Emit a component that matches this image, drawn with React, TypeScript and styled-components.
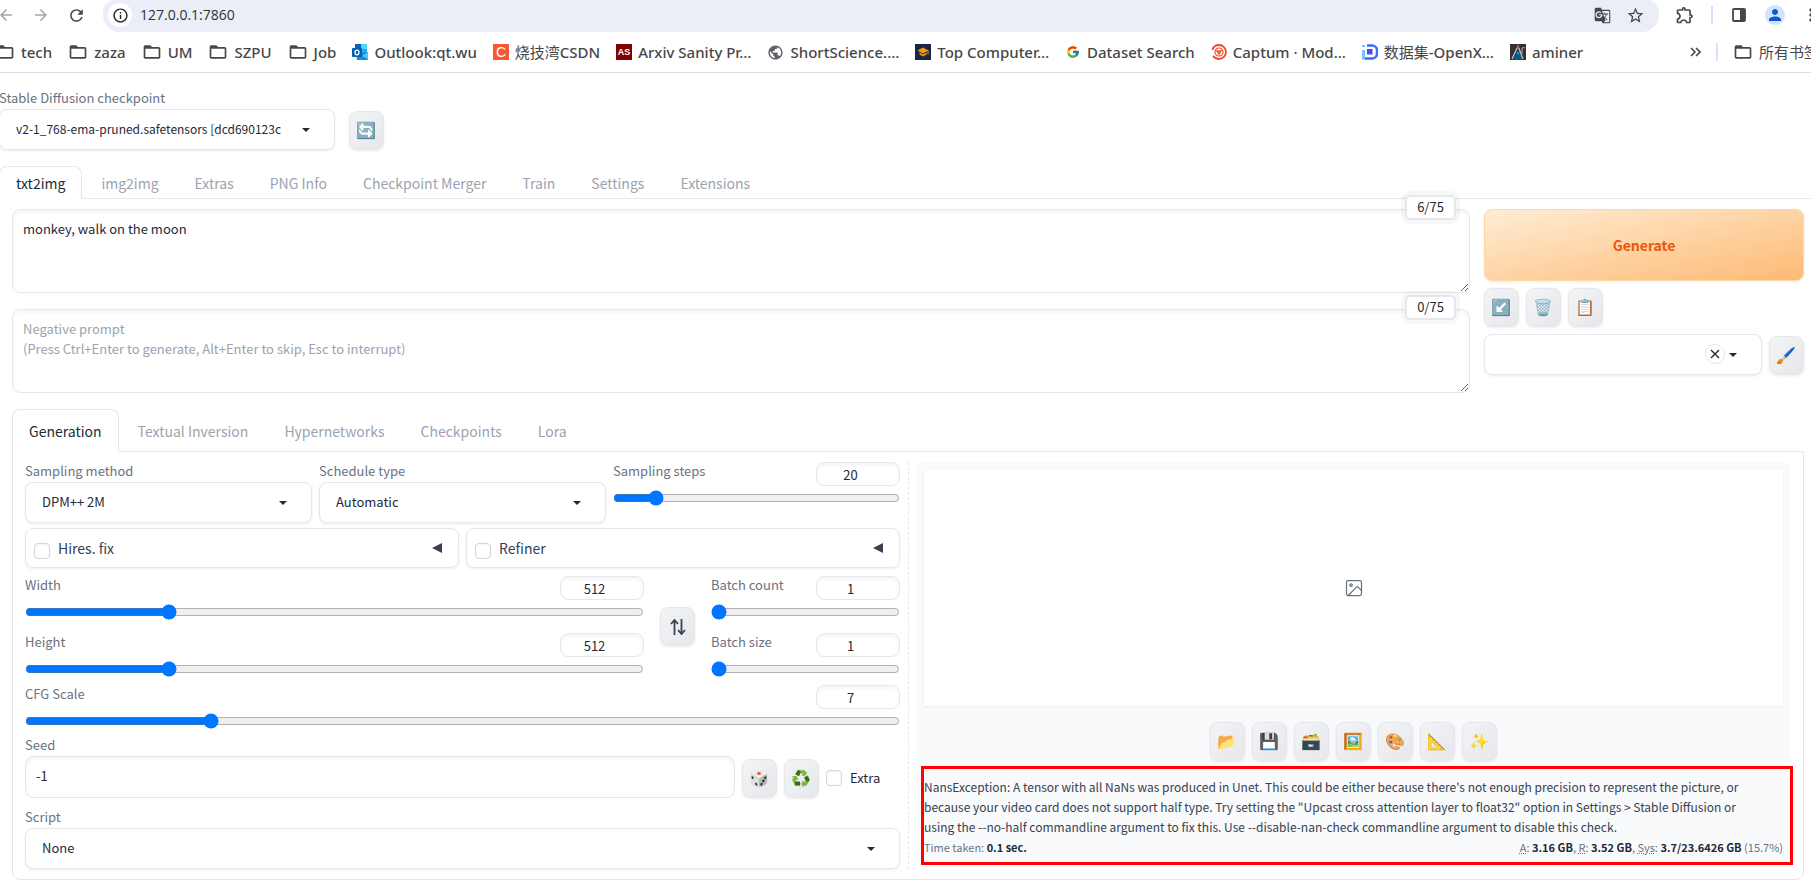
import React from "react";
import styled, { createGlobalStyle } from "styled-components";
import {
  MdArrowBack,
  MdArrowForward,
  MdFolderOpen,
  MdGTranslate,
  MdOutlineExtension,
  MdOutlineInfo,
  MdPerson,
  MdPublic,
  MdRefresh,
  MdSchool,
  MdStarBorder,
  MdMoreVert,
} from "react-icons/md";
import { FcGoogle } from "react-icons/fc";

const line = "#e5e7eb";
const ink = "#1f2937";
const muted = "#6b7280";
const faint = "#9ca3af";
const dropShadow = "0 1px 3px rgba(0, 0, 0, 0.08)";

const GlobalStyle = createGlobalStyle`
  *, *::before, *::after { box-sizing: border-box; }
  body {
    margin: 0;
    overflow: hidden;
    background: #fff;
    color: ${ink};
    font-family: "Noto Sans CJK SC", "Noto Sans", sans-serif;
    font-size: 13px;
    line-height: 20px;
  }
  button, input, select, textarea { font: inherit; color: inherit; margin: 0; }
`;

/* ---------- browser bars ---------- */

const Toolbar = styled.header`
  display: flex;
  align-items: center;
  height: 32px;
  color: #474747;
`;

const NavButtons = styled.div`
  display: flex;
  align-items: center;
  gap: 15px;
  width: 107px;
  padding-bottom: 2px;
  margin-left: -4px;
`;

const IconButton = styled.button<{ $dim?: boolean }>`
  display: grid;
  place-items: center;
  flex: none;
  width: 20px;
  height: 20px;
  padding: 0;
  border: 0;
  background: none;
  color: ${(p) => (p.$dim ? "#a6a6a6" : "#474747")};
`;

const AddressBar = styled.div`
  flex: 1;
  display: flex;
  align-items: center;
  height: 32px;
  padding: 0 14px 2px 5px;
  gap: 8px;
  border-radius: 12px 12px 17px 17px;
  background: #ebeef7;
`;

const SiteInfo = styled.button`
  display: grid;
  place-items: center;
  width: 24px;
  height: 24px;
  padding: 0;
  border: 0;
  border-radius: 50%;
  background: #fff;
  color: #1f1f1f;
`;

const Url = styled.input`
  flex: 1;
  border: 0;
  padding: 0;
  background: none;
  font-family: "Open Sans", "Noto Sans", sans-serif;
  font-size: 14px;
  color: #303136;
  outline: 0;
`;

const AddressActions = styled.div`
  display: flex;
  gap: 13px;
`;

const ToolbarActions = styled.div`
  display: flex;
  align-items: center;
  gap: 16px;
  width: 152px;
  padding: 0 0 2px 16px;
  overflow: hidden;
`;

const Separator = styled.span`
  flex: none;
  width: 2px;
  height: 18px;
  background: #d3e3fd;
`;

const Avatar = styled.span`
  display: grid;
  place-items: center;
  flex: none;
  width: 20px;
  height: 20px;
  border-radius: 50%;
  background: #d3e3fd;
  color: #0b57d0;
`;

const Bookmarks = styled.nav`
  display: flex;
  align-items: center;
  height: 41px;
  margin-left: -5px;
  border-bottom: 1px solid #dfdfdf;
  overflow: hidden;
  font-family: "Noto Sans", "Noto Sans CJK SC", sans-serif;
  font-size: 15px;
  font-weight: 500;
  color: #474747;
`;

const Bookmark = styled.a`
  display: flex;
  align-items: center;
  flex: none;
  gap: 6px;
  margin-right: 16px;
  color: inherit;
  text-decoration: none;
  white-space: nowrap;
`;

const BookmarkIcon = styled.span`
  display: grid;
  place-items: center;
  min-width: 16px;
  height: 20px;
`;

const Hanzi = styled.span`
  font-family: "Noto Sans CJK SC", sans-serif;
  font-weight: 400;
`;

const BookmarksEnd = styled.div`
  display: flex;
  align-items: center;
  flex: none;
  gap: 15px;
  width: 121px;
  margin-left: auto;
  svg { flex: none; }
`;

/* ---------- shared form parts ---------- */

const Label = styled.label`
  display: block;
  height: 20px;
  line-height: 18px;
  color: ${muted};
`;

const SelectBox = styled.div`
  position: relative;
  flex: 1;
  min-width: 0;
`;

const SelectInput = styled.select<{ $dense?: boolean }>`
  display: block;
  width: 100%;
  height: 41px;
  padding: 0 42px 2px 16px;
  border: 1px solid ${line};
  border-radius: 8px;
  background: #fff;
  box-shadow: ${dropShadow};
  appearance: none;
  font-size: ${(p) => (p.$dense ? 12 : 13)}px;
`;

const Caret = styled.svg`
  position: absolute;
  top: 11px;
  right: 20px;
  width: 18px;
  height: 18px;
  pointer-events: none;
`;

const ClearButton = styled.button`
  position: absolute;
  top: 10px;
  right: 37px;
  display: grid;
  place-items: center;
  width: 20px;
  height: 20px;
  padding: 0;
  border: 1px solid ${line};
  border-radius: 50%;
  background: #fff;
`;

const ToolButton = styled.button`
  display: grid;
  place-items: center;
  flex: none;
  width: 35px;
  height: 39px;
  padding: 0;
  border: 1px solid ${line};
  border-radius: 8px;
  background: linear-gradient(to bottom right, #f3f4f6, #e5e7eb);
  box-shadow: ${dropShadow};
  font-family: "Noto Color Emoji", sans-serif;
  font-size: 16px;
  color: #374151;
`;

const Check = styled.input`
  appearance: none;
  flex: none;
  width: 16px;
  height: 16px;
  border: 1px solid #d1d5db;
  border-radius: 4px;
  background: #fff;
  box-shadow: inset 0 1px 2px rgba(0, 0, 0, 0.05);
`;

const NumberInput = styled.input`
  width: 84px;
  height: 24px;
  padding: 0 8px;
  border: 1px solid ${line};
  border-radius: 8px;
  background: #fff;
  box-shadow: inset 0 2px 4px rgba(0, 0, 0, 0.05);
  text-align: center;
`;

const SliderField = styled.div`
  flex: 1;
  min-width: 0;
`;

const SliderHead = styled.div`
  display: flex;
  justify-content: space-between;
  height: 24px;
`;

const Range = styled.input`
  display: block;
  width: 100%;
  height: 16px;
  margin-top: 4px;
`;

/* ---------- page ---------- */

const Quick = styled.section`
  display: flex;
  align-items: flex-end;
  gap: 14px;
  padding-top: 16px;
  margin-left: -1px;
`;

const CheckpointField = styled.div`
  width: 336px;
`;

const Tabs = styled.div`
  display: flex;
  gap: 2px;
  margin-bottom: -1px;
`;

const Tab = styled.button<{ $active?: boolean; $tall?: boolean }>`
  height: ${(p) => (p.$tall ? 43 : 33)}px;
  padding: 0 16px;
  border: 1px solid ${(p) => (p.$active ? line : "transparent")};
  border-bottom: 0;
  border-radius: 8px 8px 0 0;
  background: ${(p) => (p.$active ? "#fff" : "transparent")};
  color: ${(p) => (p.$active ? ink : faint)};
  font-size: 14px;
`;

const OuterTabs = styled.section`
  margin: 16px -1px 0;
`;

const OuterPanel = styled.div`
  padding: 10px 7px 12px 12px;
  border: 1px solid ${line};
  border-radius: 0 0 8px 8px;
`;

const PromptRow = styled.div`
  display: flex;
  gap: 14px;
  margin-bottom: 16px;
`;

const Prompts = styled.div`
  flex: 1;
  display: flex;
  flex-direction: column;
  gap: 16px;
`;

const PromptBox = styled.div`
  position: relative;
  height: 84px;
`;

const PromptInput = styled.textarea`
  display: block;
  width: 100%;
  height: 84px;
  padding: 9px 10px;
  border: 1px solid ${line};
  border-radius: 8px;
  background: #fff;
  box-shadow: inset 0 2px 4px rgba(0, 0, 0, 0.05);
  &::placeholder { color: ${faint}; }
`;

const TokenCount = styled.span`
  position: absolute;
  top: -14px;
  right: 14px;
  width: 51px;
  height: 25px;
  border: 2px solid ${line};
  border-radius: 5px;
  background: #fff;
  box-shadow: 0 0 0 4px rgba(0, 0, 0, 0.03);
  text-align: center;
`;

const Actions = styled.div`
  display: flex;
  flex-direction: column;
  gap: 7px;
  width: 320px;
`;

const Generate = styled.button`
  height: 72px;
  border: 1px solid #fed7aa;
  border-radius: 8px;
  background: linear-gradient(to bottom right, #ffedd5, #fdba74);
  box-shadow: ${dropShadow};
  color: #ea580c;
  font-size: 14px;
  font-weight: 700;
`;

const Row = styled.div<{ $align?: string; $justify?: string }>`
  display: flex;
  align-items: ${(p) => p.$align ?? "flex-start"};
  justify-content: ${(p) => p.$justify ?? "flex-start"};
  gap: 7px;
`;

const Panel = styled.div`
  display: flex;
  gap: 8px;
  padding: 10px 12px;
  border: 1px solid ${line};
  border-radius: 0 0 8px 8px;
`;

const Settings = styled.div`
  flex: 1;
  min-width: 0;
`;

const Results = styled.div`
  flex: 1;
  min-width: 0;
  padding-left: 7px;
  border-left: 1px dashed ${line};
`;

const Accordions = styled.div`
  display: flex;
  gap: 7px;
  margin: 5px 0 8px;
`;

const Accordion = styled.div`
  flex: 1;
  display: flex;
  align-items: center;
  gap: 8px;
  height: 40px;
  padding: 0 16px 0 8px;
  border: 1px solid ${line};
  border-radius: 8px;
  box-shadow: ${dropShadow};
  color: #374151;
  font-size: 14px;
`;

const AccordionCheck = styled(Check)`
  margin-top: 5px;
`;

const AccordionLabel = styled.label`
  flex: 1;
`;

const Stack = styled.div`
  flex: 1;
  display: flex;
  flex-direction: column;
  gap: 13px;
  min-width: 0;
`;

const BatchStack = styled(Stack)`
  flex: none;
  width: 189px;
`;

const Sizes = styled.div`
  display: flex;
  align-items: center;
  gap: 16px;
  margin-bottom: 8px;
`;

const SeedField = styled.div`
  margin-top: 7px;
`;

const SeedInput = styled.input`
  flex: 1;
  height: 42px;
  padding: 0 10px 4px;
  border: 1px solid ${line};
  border-radius: 8px;
  box-shadow: inset 0 2px 4px rgba(0, 0, 0, 0.05);
`;

const ExtraLabel = styled.label`
  display: flex;
  align-items: center;
  gap: 8px;
  width: 74px;
  height: 40px;
`;

const ScriptField = styled.div`
  margin-top: 10px;
`;

const Output = styled.div`
  padding: 8px 8px 0;
  border-radius: 8px;
  background: #f9fafb;
`;

const Gallery = styled.div`
  display: grid;
  place-items: center;
  height: 236px;
  background: #fff;
  box-shadow: 0 1px 2px rgba(0, 0, 0, 0.06);
  color: ${muted};
`;

const GalleryButtons = styled(Row)`
  padding: 16px 0 5px;
`;

const ErrorBox = styled.div`
  display: flow-root;
  margin: 0 -10px 0 -3px;
  padding: 8px 7px 5px 0;
  border: 3px solid #f00;
  color: #374151;
`;

const ErrorText = styled.p`
  max-width: 840px;
  margin: 0;
  font-size: 12px;
`;

const Perf = styled.div`
  display: flex;
  justify-content: space-between;
  color: ${muted};
  font-size: 11px;
  b { color: ${ink}; }
  abbr { text-decoration: underline dotted; }
`;

type SliderProps = { id: string; label: string; min: number; max: number; value: number };

const Slider = ({ id, label, min, max, value }: SliderProps) => (
  <SliderField>
    <SliderHead>
      <Label htmlFor={id}>{label}</Label>
      <NumberInput type="number" aria-label={`${label} value`} defaultValue={value} />
    </SliderHead>
    <Range id={id} type="range" min={min} max={max} defaultValue={value} />
  </SliderField>
);

type DropdownProps = { id: string; value: string; name?: string; clear?: boolean; dense?: boolean };

const Dropdown = ({ id, value, name, clear, dense }: DropdownProps) => (
  <SelectBox>
    <SelectInput id={id} aria-label={name} $dense={dense}>
      <option>{value}</option>
    </SelectInput>
    {clear && (
      <ClearButton aria-label="Clear">
        <svg width="10" height="10" viewBox="0 0 10 10" stroke={ink} strokeWidth="1.4">
          <path d="M1 1l8 8M9 1l-8 8" />
        </svg>
      </ClearButton>
    )}
    <Caret viewBox="0 0 18 18" fill={ink}>
      <path d="M5 8l4 4 4-4z" />
    </Caret>
  </SelectBox>
);

const Folder = () => <MdFolderOpen size={20} />;

const Square = ({ fill, text }: { fill: string; text: string }) => (
  <svg width="16" height="16" viewBox="0 0 16 16">
    <rect width="16" height="16" fill={fill} />
    <text
      x="8"
      y={text.length > 1 ? 11 : 13}
      fill="#fff"
      textAnchor="middle"
      fontFamily="Liberation Sans, sans-serif"
      fontWeight={text.length > 1 ? 700 : 400}
      fontSize={text.length > 1 ? 9 : 14}
    >
      {text}
    </text>
  </svg>
);

const Outlook = () => (
  <svg width="16" height="16" viewBox="0 0 16 16">
    <rect x="3" width="12" height="11" rx="1" fill="#28a8ea" />
    <rect x="3" width="6" height="5" fill="#0364b8" />
    <rect x="9" width="6" height="5" fill="#50d9ff" />
    <path d="M4 9l12-1v7a1 1 0 01-1 1H5z" fill="#1490df" />
    <path d="M10 12l6-4v7z" fill="#50c8f5" />
    <rect y="4" width="10" height="9" rx="1" fill="#0061b8" />
    <ellipse cx="5" cy="8.500" rx="2" ry="2.300" fill="none" stroke="#fff" strokeWidth="1.300" />
  </svg>
);

const Scholar = () => (
  <svg width="16" height="16" viewBox="0 0 16 16">
    <rect width="16" height="16" fill="#1b2347" />
    <g transform="translate(2 2)" color="#f39c12">
      <MdSchool size={12} />
    </g>
  </svg>
);

const Captum = () => (
  <svg width="16" height="16" viewBox="0 0 16 16" fill="none" stroke="#ee4c2c">
    <circle cx="8" cy="8" r="7" strokeWidth="1.800" strokeDasharray="38 6" strokeDashoffset="20" />
    <circle cx="8" cy="8" r="4" strokeWidth="1.200" />
    <path d="M6 7h4l-2 3z" strokeWidth="1.400" />
  </svg>
);

const OpenX = () => (
  <svg width="16" height="16" viewBox="0 0 16 16" fill="none">
    <path d="M5 1.500h5a5 5 0 015 5v3a5 5 0 01-5 5H3" stroke="#3d6bff" strokeWidth="2.500" />
    <path d="M1.500 6v9.500M1.500 1v2" stroke="#7cc0ff" strokeWidth="3" />
    <rect x="5" y="5" width="5.500" height="5.500" fill="#3b4dff" />
  </svg>
);

const Aminer = () => (
  <svg width="16" height="16" viewBox="0 0 16 16" fill="none">
    <rect width="16" height="16" fill="#35312f" />
    <path d="M4 16c0-5 3-5 4-8 2 3 5 4 4 8z" fill="#075a8c" />
    <path d="M2 15L8 2l5 13" stroke="#c5ccd3" strokeWidth="1.200" />
    <circle cx="8" cy="9" r="1.500" fill="#2d8fc4" />
    <circle cx="8" cy="3" r="1.200" fill="#b0548c" />
    <path d="M12 10V5c0-1 1-2 3-1" stroke="#a49a98" strokeWidth="1.200" />
  </svg>
);

const bookmarks: [string, React.ReactNode, string?][] = [
  ["tech", <Folder />],
  ["zaza", <Folder />],
  ["UM", <Folder />],
  ["SZPU", <Folder />],
  ["Job", <Folder />],
  ["Outlook:qt.wu", <Outlook />],
  ["CSDN", <Square fill="#fc5531" text="C" />, "烧技湾"],
  ["Arxiv Sanity Pr…", <Square fill="#800000" text="AS" />],
  ["ShortScience.…", <MdPublic size={17} color="#5f6368" />],
  ["Top Computer…", <Scholar />],
  ["Dataset Search", <FcGoogle size={14} />],
  ["Captum · Mod…", <Captum />],
  ["-OpenX…", <OpenX />, "数据集"],
  ["aminer", <Aminer />],
];

const mainTabs = ["txt2img", "img2img", "Extras", "PNG Info", "Checkpoint Merger", "Train", "Settings", "Extensions"];
const subTabs = ["Generation", "Textual Inversion", "Hypernetworks", "Checkpoints", "Lora"];
const galleryTools = ["📂", "💾", "🗃️", "🖼️", "🎨", "📐", "✨"];

export default function App() {
  return (
    <>
      <GlobalStyle />
      <Toolbar>
        <NavButtons>
          <IconButton $dim aria-label="Back"><MdArrowBack size={18} /></IconButton>
          <IconButton $dim aria-label="Forward"><MdArrowForward size={18} /></IconButton>
          <IconButton aria-label="Reload"><MdRefresh size={19} /></IconButton>
        </NavButtons>
        <AddressBar>
          <SiteInfo aria-label="Site information"><MdOutlineInfo size={17} /></SiteInfo>
          <Url aria-label="Address" defaultValue="127.0.0.1:7860" />
          <AddressActions>
            <IconButton aria-label="Translate"><MdGTranslate size={17} /></IconButton>
            <IconButton aria-label="Bookmark"><MdStarBorder size={19} /></IconButton>
          </AddressActions>
        </AddressBar>
        <ToolbarActions>
          <IconButton aria-label="Extensions"><MdOutlineExtension size={20} /></IconButton>
          <Separator />
          <IconButton aria-label="Side panel">
            <svg width="14" height="14" viewBox="0 0 14 14">
              <rect x="1" y="1" width="12" height="12" rx="1" fill="none" stroke="currentColor" strokeWidth="1.800" />
              <rect x="8" y="1" width="5" height="12" fill="currentColor" />
            </svg>
          </IconButton>
          <Avatar><MdPerson size={18} /></Avatar>
          <IconButton aria-label="Menu"><MdMoreVert size={20} /></IconButton>
        </ToolbarActions>
      </Toolbar>
      <Bookmarks>
        {bookmarks.map(([name, icon, hanzi]) => (
          <Bookmark href="#" key={name}>
            <BookmarkIcon>{icon}</BookmarkIcon>
            <span>{hanzi && <Hanzi>{hanzi}</Hanzi>}{name}</span>
          </Bookmark>
        ))}
        <BookmarksEnd>
          <svg width="11" height="10" viewBox="0 0 11 10" fill="none" stroke="#474747" strokeWidth="1.600">
            <path d="M1 1l4 4-4 4M6 1l4 4-4 4" />
          </svg>
          <Separator />
          <Bookmark href="#">
            <BookmarkIcon><Folder /></BookmarkIcon>
            <Hanzi>所有书签</Hanzi>
          </Bookmark>
        </BookmarksEnd>
      </Bookmarks>

      <main>
        <Quick>
          <CheckpointField>
            <Label htmlFor="checkpoint">Stable Diffusion checkpoint</Label>
            <Dropdown id="checkpoint" value="v2-1_768-ema-pruned.safetensors [dcd690123c" dense />
          </CheckpointField>
          <ToolButton>🔄</ToolButton>
        </Quick>

        <OuterTabs>
          <Tabs role="tablist">
            {mainTabs.map((name, i) => (
              <Tab role="tab" key={name} $active={i === 0}>{name}</Tab>
            ))}
          </Tabs>
          <OuterPanel>
            <PromptRow>
              <Prompts>
                <PromptBox>
                  <PromptInput aria-label="Prompt" defaultValue="monkey, walk on the moon" />
                  <TokenCount>6/75</TokenCount>
                </PromptBox>
                <PromptBox>
                  <PromptInput
                    aria-label="Negative prompt"
                    placeholder={"Negative prompt\n(Press Ctrl+Enter to generate, Alt+Enter to skip, Esc to interrupt)"}
                  />
                  <TokenCount>0/75</TokenCount>
                </PromptBox>
              </Prompts>
              <Actions>
                <Generate>Generate</Generate>
                <Row>
                  <ToolButton>↙️</ToolButton>
                  <ToolButton>🗑️</ToolButton>
                  <ToolButton>📋</ToolButton>
                </Row>
                <Row $align="flex-end">
                  <Dropdown id="styles" name="Styles" value="" clear />
                  <ToolButton>🖌️</ToolButton>
                </Row>
              </Actions>
            </PromptRow>

            <Tabs role="tablist">
              {subTabs.map((name, i) => (
                <Tab role="tab" key={name} $active={i === 0} $tall>{name}</Tab>
              ))}
            </Tabs>
            <Panel>
              <Settings>
                <Row>
                  <SliderField>
                    <Label htmlFor="sampler">Sampling method</Label>
                    <Dropdown id="sampler" value="DPM++ 2M" />
                  </SliderField>
                  <SliderField>
                    <Label htmlFor="schedule">Schedule type</Label>
                    <Dropdown id="schedule" value="Automatic" />
                  </SliderField>
                  <Slider id="steps" label="Sampling steps" min={1} max={150} value={20} />
                </Row>
                <Accordions>
                  {["Hires. fix", "Refiner"].map((name) => (
                    <Accordion key={name}>
                      <AccordionCheck type="checkbox" id={name} />
                      <AccordionLabel htmlFor={name}>{name}</AccordionLabel>
                      <svg width="10" height="10" viewBox="0 0 10 10" fill="#374151">
                        <path d="M0 5l10-5v10z" />
                      </svg>
                    </Accordion>
                  ))}
                </Accordions>
                <Sizes>
                  <Stack>
                    <Slider id="width" label="Width" min={64} max={2048} value={512} />
                    <Slider id="height" label="Height" min={64} max={2048} value={512} />
                  </Stack>
                  <ToolButton aria-label="Swap width and height">
                    <svg width="16" height="16" viewBox="0 0 16 16" fill="none" stroke="currentColor" strokeWidth="1.800">
                      <path d="M4.500 16V1.500M1 5l3.500-4L8 5M11.500 0v14.500M8 11l3.500 4 3.500-4" />
                    </svg>
                  </ToolButton>
                  <BatchStack>
                    <Slider id="count" label="Batch count" min={1} max={100} value={1} />
                    <Slider id="size" label="Batch size" min={1} max={8} value={1} />
                  </BatchStack>
                </Sizes>
                <Slider id="cfg" label="CFG Scale" min={1} max={30} value={7} />
                <SeedField>
                  <Label htmlFor="seed">Seed</Label>
                  <Row $align="flex-end">
                    <SeedInput id="seed" type="number" defaultValue={-1} />
                    <ToolButton>🎲️</ToolButton>
                    <ToolButton>♻️</ToolButton>
                    <ExtraLabel><Check type="checkbox" />Extra</ExtraLabel>
                  </Row>
                </SeedField>
                <ScriptField>
                  <Label htmlFor="script">Script</Label>
                  <Dropdown id="script" value="None" />
                </ScriptField>
              </Settings>
              <Results>
                <Output>
                  <Gallery>
                    <svg width="20" height="20" viewBox="0 0 24 24" fill="none" stroke="currentColor" strokeWidth="1.500" strokeLinejoin="round" strokeLinecap="round">
                      <rect x="3" y="3" width="18" height="18" rx="2" />
                      <circle cx="8.500" cy="8.500" r="1.500" />
                      <path d="M21 15l-5-5L5 21" />
                    </svg>
                  </Gallery>
                  <GalleryButtons $justify="center">
                    {galleryTools.map((t) => <ToolButton key={t}>{t}</ToolButton>)}
                  </GalleryButtons>
                  <ErrorBox>
                    <ErrorText>
                      NansException: A tensor with all NaNs was produced in Unet. This could be either because there's not enough precision to represent the picture, or because your video card does not support half type. Try setting the "Upcast cross attention layer to float32" option in Settings &gt; Stable Diffusion or using the --no-half commandline argument to fix this. Use --disable-nan-check commandline argument to disable this check.
                    </ErrorText>
                    <Perf>
                      <span>Time taken: <b>0.1 sec.</b></span>
                      <span>
                        <abbr>A</abbr>: <b>3.16 GB</b>, <abbr>R</abbr>: <b>3.52 GB</b>, <abbr>Sys</abbr>: <b>3.7/23.6426 GB</b> (15.7%)
                      </span>
                    </Perf>
                  </ErrorBox>
                </Output>
              </Results>
            </Panel>
          </OuterPanel>
        </OuterTabs>
      </main>
    </>
  );
}
